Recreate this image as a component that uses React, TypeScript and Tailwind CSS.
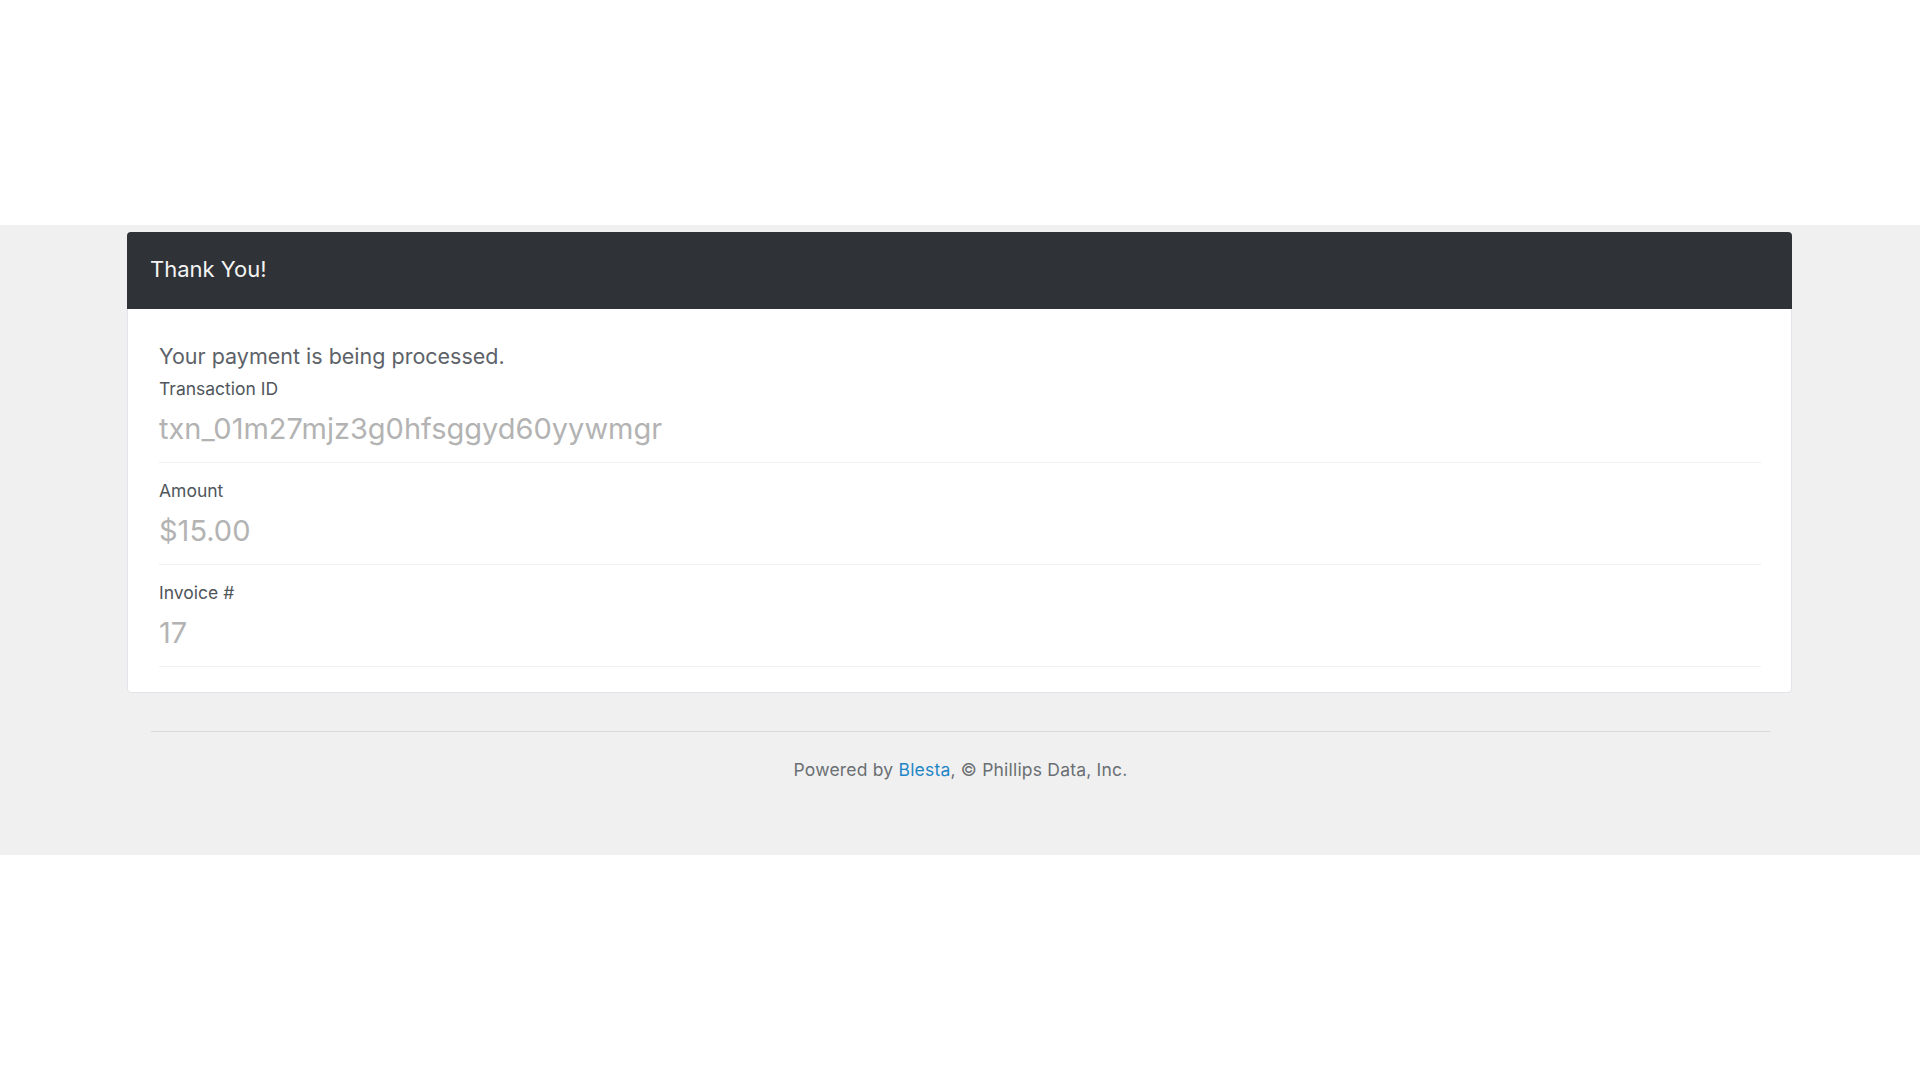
export default function App() {
  const rows = [
    { label: 'Amount', value: '$15.00' },
    { label: 'Invoice #', value: '17' },
  ];

  return (
    <div className="min-h-screen bg-white font-['Inter','Noto_Sans',sans-serif]">
      <div className="h-[225px]" />
      <div className="bg-[#f0f0f0] pt-[7px] pb-[73px]">
        <div className="ml-[127px] mr-[128px] rounded-[4px] border border-[#e1e4e8] bg-white">
          <div className="-mx-px -mt-px flex h-[77px] items-center rounded-t-[4px] bg-[#2f3337] px-[23px] pb-[3px]">
            <h2 className="text-[22px] leading-[26px] text-[#f4f4f4]">Thank You!</h2>
          </div>
          <div className="pl-[31px] pr-[30px] pb-[25px]">
            <div className="border-b border-[#f1f1f1] pt-[35px] pb-[16px]">
              <p className="text-[21.5px] leading-[24px] text-[#5d6268]">Your payment is being processed.</p>
              <div className="mt-[9px] text-[17.5px] leading-6 text-[#50565c]">Transaction ID</div>
              <div className="mt-[11px] text-[29px] leading-[34px] text-[#b3b3b3]">
                txn_01m27mjz3g0hfsggyd60yywmgr
              </div>
            </div>
            {rows.map((row) => (
              <div key={row.label} className="border-b border-[#f1f1f1] pt-[16px] pb-[16px]">
                <div className="text-[17.5px] leading-6 text-[#50565c]">{row.label}</div>
                <div className="mt-[11px] text-[29px] leading-[34px] text-[#b3b3b3]">{row.value}</div>
              </div>
            ))}
          </div>
        </div>

        <div className="ml-[151px] mr-[150px] mt-[38px] border-t border-[#d9d9d9] pt-[26px] text-center text-[17.5px] leading-6 tracking-[0.2px] text-[#6b6f73]">
          Powered by <a className="text-[#1f86c6]">Blesta</a>, © Phillips Data, Inc.
        </div>
      </div>
    </div>
  );
}
